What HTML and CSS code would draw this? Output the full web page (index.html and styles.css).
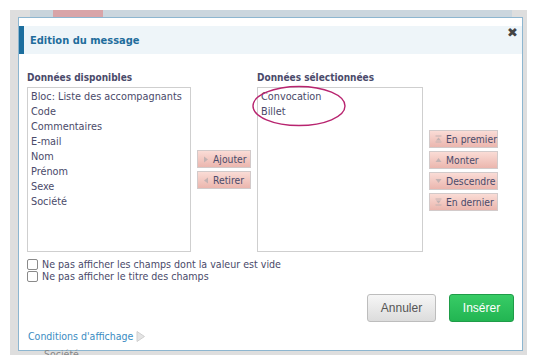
FILE: index.html
```html
<!DOCTYPE html>
<html lang="fr">
<head>
  <meta charset="UTF-8">
  <title>Edition du message</title>
  <link rel="stylesheet" href="styles.css">
</head>
<body>
  <div class="backdrop">
    <div class="page-strip"></div>
    <div class="dialog">
      <div class="dialog-header">
        <h1>Edition du message</h1>
        <span class="close">&#10006;</span>
      </div>

      <div class="fields">
        <div class="field-label">Données disponibles</div>
        <div></div>
        <div class="field-label">Données sélectionnées</div>
        <div></div>

        <ul class="field-list">
          <li>Bloc: Liste des accompagnants</li>
          <li>Code</li>
          <li>Commentaires</li>
          <li>E-mail</li>
          <li>Nom</li>
          <li>Prénom</li>
          <li>Sexe</li>
          <li>Société</li>
        </ul>

        <div class="move-buttons">
          <button class="small-btn">
            <svg width="6" height="7" viewBox="0 0 6 7"><path d="M1 0.5 L5 3.5 L1 6.5 Z" fill="#c2b2b2"/></svg>
            Ajouter
          </button>
          <button class="small-btn">
            <svg width="6" height="7" viewBox="0 0 6 7"><path d="M5 0.5 L1 3.5 L5 6.5 Z" fill="#c2b2b2"/></svg>
            Retirer
          </button>
        </div>

        <div class="selected-wrap">
          <ul class="field-list">
            <li>Convocation</li>
            <li>Billet</li>
          </ul>
          <svg class="highlight" width="96" height="42" viewBox="0 0 96 42">
            <ellipse cx="48" cy="21" rx="46" ry="19.5" fill="none" stroke="#b8246f" stroke-width="1.4"/>
          </svg>
        </div>

        <div class="order-buttons">
          <button class="small-btn">
            <svg width="7" height="8" viewBox="0 0 7 8"><path d="M0.5 1 H6.5" stroke="#c2b2b2"/><path d="M3.5 2.5 L6 5.5 H1 Z" fill="#c2b2b2"/><path d="M0.5 7 H6.5" stroke="#c2b2b2"/></svg>
            En premier
          </button>
          <button class="small-btn">
            <svg width="7" height="8" viewBox="0 0 7 8"><path d="M3.5 2 L6.5 6 H0.5 Z" fill="#c2b2b2"/></svg>
            Monter
          </button>
          <button class="small-btn">
            <svg width="7" height="8" viewBox="0 0 7 8"><path d="M3.5 6 L6.5 2 H0.5 Z" fill="#c2b2b2"/></svg>
            Descendre
          </button>
          <button class="small-btn">
            <svg width="7" height="8" viewBox="0 0 7 8"><path d="M0.5 1 H6.5" stroke="#c2b2b2"/><path d="M3.5 5.5 L6 2.5 H1 Z" fill="#c2b2b2"/><path d="M0.5 7 H6.5" stroke="#c2b2b2"/></svg>
            En dernier
          </button>
        </div>
      </div>

      <div class="options">
        <label><span class="checkbox"></span>Ne pas afficher les champs dont la valeur est vide</label>
        <label><span class="checkbox"></span>Ne pas afficher le titre des champs</label>
      </div>

      <div class="actions">
        <button class="btn btn-cancel">Annuler</button>
        <button class="btn btn-insert">Insérer</button>
      </div>

      <a class="conditions" href="#">Conditions d'affichage
        <svg width="9" height="11" viewBox="0 0 9 11"><path d="M1 0.5 L8.5 5.5 L1 10.5 Z" fill="#e4e4e4" stroke="#d0d0d0"/></svg>
      </a>
    </div>
    <div class="below">Société</div>
  </div>
</body>
</html>
```

FILE: styles.css
```css
body {
  margin: 0;
  background: #fff;
  font-family: "DejaVu Sans Condensed", "DejaVu Sans", sans-serif;
  color: #4a4a6a;
}

.backdrop {
  margin: 10px 0 0 10px;
  width: 517px;
  height: 345px;
  background: #dedede;
  overflow: hidden;
}

.page-strip {
  height: 7px;
  margin: 0 15px 0 20px;
  background: linear-gradient(to right, #c8d4dc 23px, #d8a4a8 23px, #d8a4a8 73px, #cbd6de 73px);
}

.dialog {
  position: relative;
  margin-left: 8px;
  width: 503px;
  height: 332px;
  background: #fff;
  border: 1px solid #8db6d0;
}

.dialog-header {
  margin-top: 8px;
  height: 28px;
  background: #eef5f9;
  border-left: 5px solid #1c6e9e;
  display: flex;
  align-items: center;
}

.dialog-header h1 {
  margin: 0 0 0 6px;
  font-size: 11px;
  font-weight: bold;
  color: #1f6d9c;
}

.close {
  position: absolute;
  top: 8px;
  right: 4px;
  font-family: "DejaVu Sans", sans-serif;
  font-size: 13px;
  line-height: 13px;
  font-weight: bold;
  color: #444;
}

/* two lists with their button columns */
.fields {
  display: grid;
  grid-template-columns: 164px 54px 166px 69px;
  column-gap: 6px;
  padding: 18px 0 0 8px;
}

.field-label {
  font-size: 10px;
  font-weight: bold;
  line-height: 12px;
  margin-bottom: 3px;
}

.field-list {
  list-style: none;
  margin: 0;
  padding: 1px 3px;
  height: 161px;
  border: 1px solid #cfcfcf;
  font-size: 10.8px;
  line-height: 15px;
}

.selected-wrap {
  position: relative;
}

.highlight {
  position: absolute;
  left: -6px;
  top: -2px;
}

.move-buttons,
.order-buttons {
  display: flex;
  flex-direction: column;
  gap: 3px;
}

.move-buttons {
  padding-top: 63px;
}

.order-buttons {
  padding-top: 43px;
}

.small-btn {
  display: flex;
  align-items: center;
  gap: 4px;
  height: 18px;
  padding: 0 0 0 5px;
  border: 1px solid #d2caca;
  background: linear-gradient(#fadcd6, #ebb6ae);
  font-family: "DejaVu Sans Condensed", "DejaVu Sans", sans-serif;
  font-size: 10.3px;
  color: #4a4a6a;
  text-align: left;
}

.options {
  display: flex;
  flex-direction: column;
  padding: 6px 0 0 8px;
}

.options label {
  display: flex;
  align-items: center;
  gap: 4px;
  height: 12px;
  font-size: 10.6px;
}

.checkbox {
  width: 9px;
  height: 9px;
  border: 1px solid #8a8a8a;
  border-radius: 2px;
  background: #fff;
}

.actions {
  display: flex;
  justify-content: flex-end;
  gap: 13px;
  padding: 12px 8px 0 0;
}

.btn {
  height: 28px;
  border-radius: 3px;
  font-family: "Liberation Sans", Arial, sans-serif;
  font-size: 12px;
}

.btn-cancel {
  width: 69px;
  border: 1px solid #bdbdbd;
  background: linear-gradient(#f6f6f6, #dcdcdc);
  color: #555;
}

.btn-insert {
  width: 65px;
  border: 1px solid #1f9c48;
  background: linear-gradient(#38cc66, #22b552);
  color: #fff;
}

.conditions {
  display: flex;
  align-items: center;
  gap: 3px;
  margin: 8px 0 0 9px;
  font-size: 10.5px;
  color: #3a8cc2;
  text-decoration: none;
}

.below {
  margin: 0 0 0 34px;
  font-size: 10.5px;
  line-height: 12px;
  color: #888;
  position: relative;
  top: -3px;
}
```
